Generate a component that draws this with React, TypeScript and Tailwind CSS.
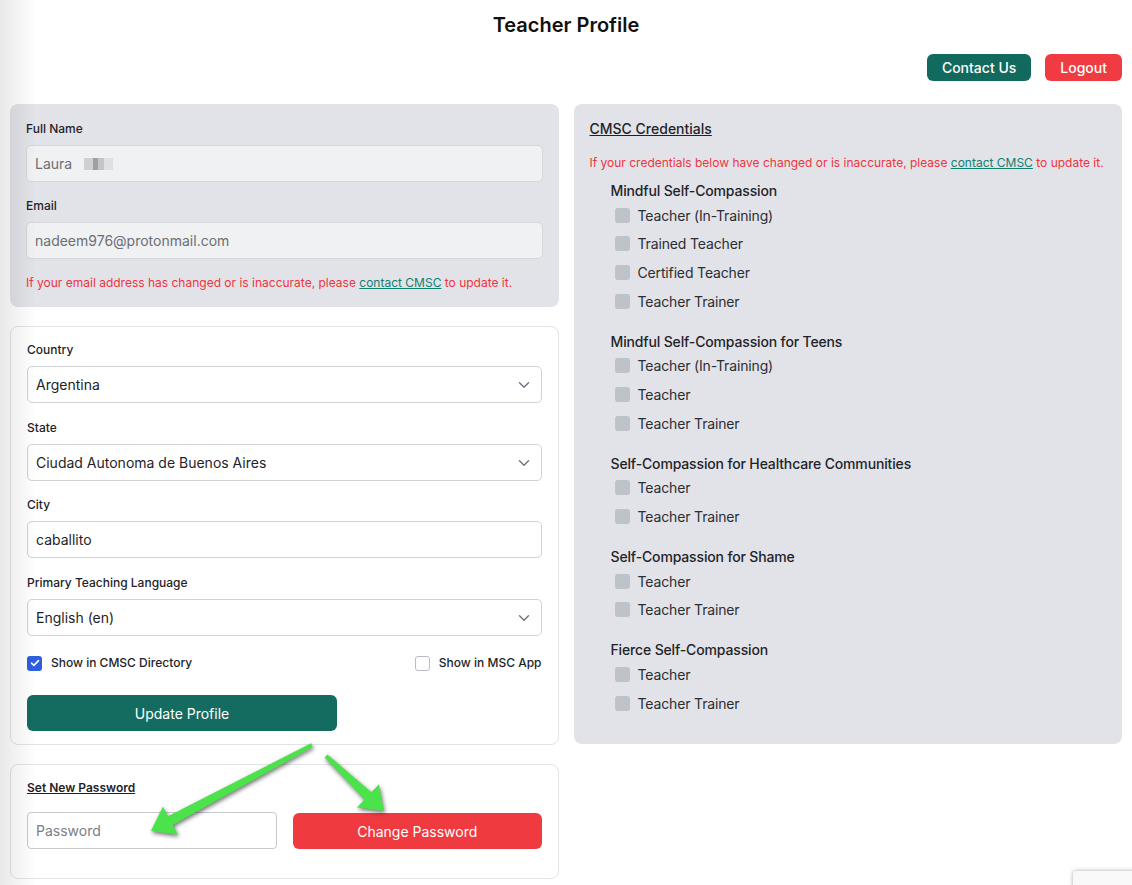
import React from 'react';

const font = { fontFamily: 'Inter, "Noto Sans", sans-serif' };

function Chevron() {
  return (
    <svg className="pointer-events-none absolute right-[12px] top-1/2 -translate-y-1/2" width="12" height="8" viewBox="0 0 12 8" fill="none">
      <path d="M1.5 1.75L6 6.25L10.5 1.75" stroke="#6b7280" strokeWidth="1.4" strokeLinecap="round" strokeLinejoin="round" />
    </svg>
  );
}

function SelectBox({ value }: { value: string }) {
  return (
    <div className="relative">
      <select
        defaultValue={value}
        className="h-[37px] w-full appearance-none rounded-[5px] border border-[#cfd2d6] bg-white px-2 text-[14px] text-[#1f2328] outline-none"
      >
        <option>{value}</option>
      </select>
      <Chevron />
    </div>
  );
}

function Label({ children }: { children: React.ReactNode }) {
  return <div className="mb-[8px] text-[12px] font-medium leading-4 text-[#1f2328]">{children}</div>;
}

function CredItem({ label }: { label: string }) {
  return (
    <div className="flex h-[28.67px] items-center pl-1">
      <span className="mr-2 h-[15px] w-[15px] rounded-[3px] bg-[#bec2c9]" />
      <span className="text-[14px] tracking-[-0.15px] text-[#2b2e33]">{label}</span>
    </div>
  );
}

function CredSection({ title, items, first }: { title: string; items: string[]; first?: boolean }) {
  return (
    <div className={first ? '' : 'mt-4'}>
      <div className="text-[14px] font-medium leading-5 tracking-[-0.15px] text-[#1f2328]">{title}</div>
      {items.map((i) => (
        <CredItem key={i} label={i} />
      ))}
    </div>
  );
}

export default function App() {
  return (
    <div className="relative min-h-[885px] overflow-hidden bg-white px-[10px] text-[#1f2328]" style={font}>
      {/* left window shadow */}
      <div className="pointer-events-none absolute left-0 top-0 z-20 h-full w-[36px] bg-gradient-to-r from-black/[0.09] to-transparent" />

      <h1 className="pt-[11px] text-center text-[20px] font-semibold leading-7 text-[#111]">Teacher Profile</h1>

      <div className="mt-[15px] flex justify-end gap-[14px]">
        <button className="h-[27px] rounded-[6px] bg-[#12695d] px-[15px] text-[14px] font-medium text-white">Contact Us</button>
        <button className="h-[27px] rounded-[6px] bg-[#ef3b41] px-[15px] text-[14px] font-medium text-white">Logout</button>
      </div>

      <div className="mt-[23px] grid grid-cols-2 items-start gap-[15px]">
        <div className="flex flex-col gap-[19px]">
          <div className="rounded-[8px] bg-[#e2e3e8] px-4 pb-4 pt-[17px]">
            <Label>Full Name</Label>
            <div className="flex h-[37px] items-center rounded-[5px] border border-[#d5d7db] bg-[#f0f1f3] px-2 text-[14px] text-[#6b6f75]">
              Laura
              <span className="ml-[12px] flex h-[12px]">
                <span className="w-[9px] bg-[#cfd0d3]" />
                <span className="w-[5px] bg-[#9ea0a4]" />
                <span className="w-[6px] bg-[#c4c5c9]" />
                <span className="w-[9px] bg-[#dfe0e3]" />
              </span>
            </div>
            <div className="mt-4">
              <Label>Email</Label>
              <div className="flex h-[37px] items-center rounded-[5px] border border-[#d5d7db] bg-[#f0f1f3] px-2 text-[14px] text-[#6b6f75]">
                nadeem976@protonmail.com
              </div>
            </div>
            <p className="mt-4 text-[12px] leading-4 text-[#ef3340]">
              If your email address has changed or is inaccurate, please{' '}
              <a className="text-[#12806e] underline">contact CMSC</a> to update it.
            </p>
          </div>

          <div className="rounded-[8px] border border-[#e1e3e6] bg-white px-4 pb-[13px] pt-[15px]">
            <Label>Country</Label>
            <SelectBox value="Argentina" />
            <div className="mt-[17px]">
              <Label>State</Label>
              <SelectBox value="Ciudad Autonoma de Buenos Aires" />
            </div>
            <div className="mt-4">
              <Label>City</Label>
              <input
                defaultValue="caballito"
                className="h-[37px] w-full rounded-[5px] border border-[#cfd2d6] bg-white px-2 text-[14px] text-[#1f2328] outline-none"
              />
            </div>
            <div className="mt-[17px]">
              <Label>Primary Teaching Language</Label>
              <SelectBox value="English (en)" />
            </div>
            <div className="mt-[18px] flex items-center justify-between">
              <label className="flex items-center gap-[9px] text-[12px] font-medium">
                <span className="flex h-[15px] w-[15px] items-center justify-center rounded-[3px] bg-[#2f5fe0]">
                  <svg width="10" height="8" viewBox="0 0 10 8" fill="none">
                    <path d="M1.5 4.2L3.9 6.4L8.5 1.6" stroke="white" strokeWidth="1.6" strokeLinecap="round" strokeLinejoin="round" />
                  </svg>
                </span>
                Show in CMSC Directory
              </label>
              <label className="flex items-center gap-[9px] text-[12px] font-medium">
                <span className="h-[15px] w-[15px] rounded-[3px] border border-[#b9bdc3] bg-white" />
                Show in MSC App
              </label>
            </div>
            <button className="mt-[23px] h-[36px] w-[310px] rounded-[6px] bg-[#146b5f] text-[14px] text-white">Update Profile</button>
          </div>

          <div className="rounded-[8px] border border-[#e1e3e6] bg-white px-4 pb-[29px] pt-[15px]">
            <div className="text-[12px] font-semibold leading-4 underline">Set New Password</div>
            <div className="mt-4 flex gap-4">
              <input
                placeholder="Password"
                className="h-[37px] w-[250px] rounded-[4px] border border-[#c6c9ce] bg-white px-2 text-[14px] text-[#1f2328] outline-none placeholder:text-[#7a7e85]"
              />
              <button className="mt-px h-[36px] flex-1 rounded-[6px] bg-[#ef3a40] text-[14px] text-white">Change Password</button>
            </div>
          </div>
        </div>

        <div className="rounded-[8px] bg-[#e2e3e8] px-4 pb-[26px] pt-[15px]">
          <div className="text-[14px] font-medium leading-5 underline">CMSC Credentials</div>
          <p className="mt-4 text-[12px] leading-4 text-[#ef3340]">
            If your credentials below have changed or is inaccurate, please{' '}
            <a className="text-[#12806e] underline">contact CMSC</a> to update it.
          </p>
          <div className="mt-[10px] pl-[21px]">
            <CredSection first title="Mindful Self-Compassion" items={['Teacher (In-Training)', 'Trained Teacher', 'Certified Teacher', 'Teacher Trainer']} />
            <CredSection title="Mindful Self-Compassion for Teens" items={['Teacher (In-Training)', 'Teacher', 'Teacher Trainer']} />
            <CredSection title="Self-Compassion for Healthcare Communities" items={['Teacher', 'Teacher Trainer']} />
            <CredSection title="Self-Compassion for Shame" items={['Teacher', 'Teacher Trainer']} />
            <CredSection title="Fierce Self-Compassion" items={['Teacher', 'Teacher Trainer']} />
          </div>
        </div>
      </div>

      {/* annotation arrows */}
      <svg className="pointer-events-none absolute left-0 top-0 z-10 drop-shadow-[1px_2px_2px_rgba(0,0,0,0.55)]" width="1132" height="885" viewBox="0 0 1132 885">
        <polygon fill="#4be24b" points="312.9,746.8 172.8,825.0 177.9,834.7 151,831 162.9,806.5 168.0,816.2 311.1,743.2" />
        <polygon fill="#4be24b" points="327.4,754.5 371.4,792.3 379.0,784.3 384,811 357.0,807.5 364.6,799.5 324.6,757.5" />
      </svg>

      {/* recaptcha badge edge */}
      <div className="absolute left-[1073px] top-[871px] h-[60px] w-[80px] rounded-tl-[3px] bg-[#f9f9f9] shadow-[0_0_4px_rgba(0,0,0,0.35)]" />
    </div>
  );
}
